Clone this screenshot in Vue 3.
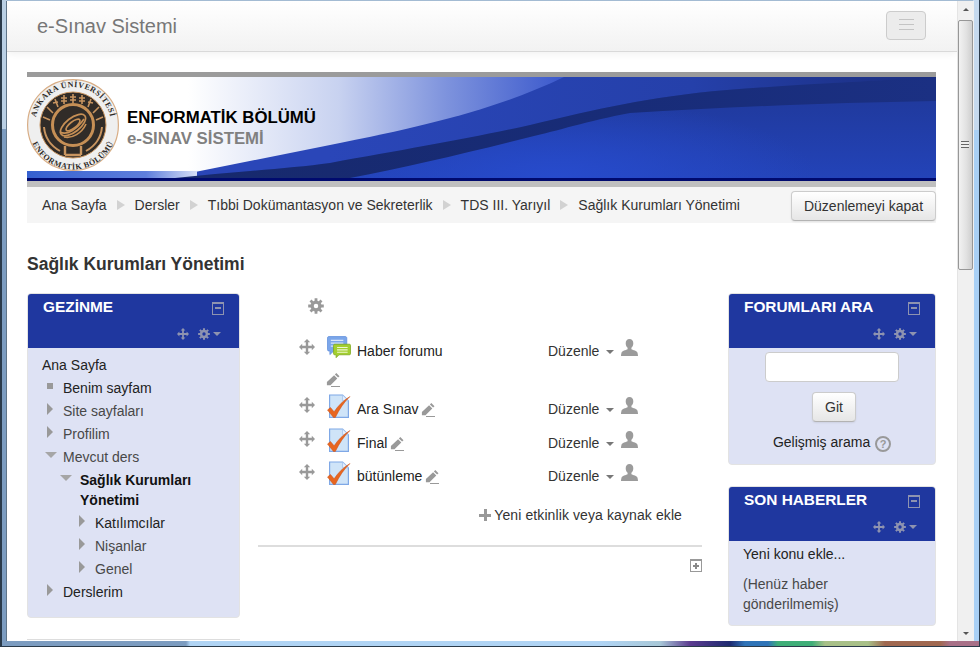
<template>
  <div class="window">
    <!-- icon sprite -->
    <svg class="sprite" aria-hidden="true">
      <symbol id="i-move" viewBox="0 0 16 16">
        <path fill="currentColor" d="M8 0l3.2 3.2H9.200v3.600h3.600V4.800L16 8l-3.200 3.200V9.200H9.200v3.600h2L8 16l-3.200-3.200h2V9.200H3.200v2L0 8l3.200-3.200v2h3.600V3.200h-2z" />
      </symbol>
      <symbol id="i-gear" viewBox="0 0 16 16">
        <circle cx="8" cy="8" r="3.900" fill="none" stroke="currentColor" stroke-width="3.300" />
        <path stroke="currentColor" stroke-width="2.800" fill="none" d="M8 .2V3M8 13v2.800M.2 8H3M13 8h2.800M2.500 2.500l2 2M11.500 11.500l2 2M2.500 13.500l2-2M11.500 4.500l2-2" />
      </symbol>
      <symbol id="i-person" viewBox="0 0 17 17">
        <path fill="currentColor" d="M8.500 0c2.400 0 3.800 1.700 3.800 4.200 0 1.900-.8 3.600-1.900 4.600v1.500c1.800.8 5.600 1.700 6.100 3.400.2.700.5 2.300.5 3.300H0c0-1 .3-2.600.5-3.300.5-1.700 4.300-2.600 6.100-3.400V8.800C5.500 7.800 4.700 6.100 4.700 4.200 4.700 1.700 6.100 0 8.500 0z" />
      </symbol>
      <symbol id="i-pencil" viewBox="0 0 14 14">
        <path fill="currentColor" d="M10.300 0l3.200 3.200-1.400 1.400-3.200-3.200zM8.100 2.200l3.200 3.200-6.800 6.800H.9V9z" />
        <path fill="none" stroke="currentColor" stroke-width="1" d="M5 13.500h9" />
      </symbol>
      <symbol id="i-quiz" viewBox="0 0 24 25">
        <path fill="#cfe4f8" stroke="#7fa8e6" stroke-width="1.200" d="M2.600 1h13l5.800 5.800V23.400H2.600z" />
        <path fill="#eaf3fc" stroke="#9fc0ec" stroke-width=".8" d="M15.600 1v5.800h5.800z" />
        <path fill="#e8661f" stroke="#c9501a" stroke-width=".5" d="M.5 16l3-2.500 3.600 4.300C11 12 16 6.500 23 2.500 17 8 12.500 15 8.300 23.500H6.500z" />
      </symbol>
      <symbol id="i-forum" viewBox="0 0 25 24">
        <path fill="#7ba6ea" stroke="#5f8fdc" stroke-width=".8" d="M2 .6h17c1 0 1.600.6 1.600 1.600V14c0 1-.6 1.600-1.600 1.600H7l-4 3.800v-3.800H2C1 15.600.5 15 .5 14V2.200C.5 1.200 1 .6 2 .6z" />
        <path stroke="#d8e6fa" stroke-width="1.200" d="M4 4.500h13M4 7.500h13M4 10.500h8" />
        <path fill="#a3cf2f" stroke="#7ea61e" stroke-width=".8" d="M8 8.600h15.300c.7 0 1.200.5 1.200 1.200v8.600c0 .7-.5 1.200-1.200 1.200H12.500l-3 3v-3H8c-.7 0-1.200-.5-1.200-1.200V9.800c0-.7.5-1.200 1.200-1.200z" />
        <path stroke="#eef7d0" stroke-width="1.100" d="M10.500 12h11M10.500 14.500h11M10.500 17h11" />
      </symbol>
    </svg>

    <div class="viewport">
      <div class="page">
        <nav class="navbar">
          <span class="brand">e-Sınav Sistemi</span>
          <button class="toggle"><i></i><i></i><i></i></button>
        </nav>

        <div class="content">
          <header class="banner">
            <svg class="banner-art" viewBox="0 0 909 101" preserveAspectRatio="none" aria-hidden="true">
              <defs>
                <linearGradient id="ban-base" x1="0" y1="0" x2="0" y2="1">
                  <stop offset="0" stop-color="#1f3796" />
                  <stop offset="1" stop-color="#2343b8" />
                </linearGradient>
                <linearGradient id="ban-up" x1="300" y1="0" x2="909" y2="0" gradientUnits="userSpaceOnUse">
                  <stop offset="0" stop-color="#2a46b8" />
                  <stop offset=".6" stop-color="#2540aa" />
                  <stop offset="1" stop-color="#1a2d7e" />
                </linearGradient>
                <radialGradient id="ban-glow" cx="530" cy="101" r="260" gradientUnits="userSpaceOnUse" gradientTransform="translate(0 70) scale(1 .3)">
                  <stop offset="0" stop-color="#274bcc" />
                  <stop offset="1" stop-color="#274bcc" stop-opacity="0" />
                </radialGradient>
                <linearGradient id="ban-light" x1="0" y1="0" x2="537" y2="0" gradientUnits="userSpaceOnUse">
                  <stop offset=".3" stop-color="#ffffff" />
                  <stop offset=".58" stop-color="#c8d2f0" />
                  <stop offset=".78" stop-color="#7e93dd" />
                  <stop offset="1" stop-color="#3a58cc" />
                </linearGradient>
                <linearGradient id="ban-strip" x1="0" y1="0" x2="170" y2="0" gradientUnits="userSpaceOnUse">
                  <stop offset="0" stop-color="#3560cf" />
                  <stop offset=".7" stop-color="#5f7fdc" />
                  <stop offset="1" stop-color="#d8e0f6" />
                </linearGradient>
                <linearGradient id="ban-dark" x1="150" y1="0" x2="909" y2="0" gradientUnits="userSpaceOnUse">
                  <stop offset="0" stop-color="#17296c" />
                  <stop offset=".6" stop-color="#182c78" />
                  <stop offset="1" stop-color="#1b3083" />
                </linearGradient>
              </defs>
              <rect width="909" height="101" fill="url(#ban-base)" />
              <rect width="909" height="101" fill="url(#ban-glow)" />
              <path fill="url(#ban-up)" d="M100 0H909V2C850 3 780 7 700 13 620 20 570 32 503 48 440 62 380 72 303 86 260 92 200 95 148 101H100z" />
              <path fill="url(#ban-light)" d="M0 0H537C470 32 403 48 303 68L163 96H0z" />
              <rect y="94" width="170" height="7" fill="url(#ban-strip)" />
              <path fill="url(#ban-dark)" d="M148 101C200 95 260 92 303 86 380 72 440 62 503 48 570 32 620 20 700 13 780 7 850 3 909 1V24C800 26 700 30 603 36 560 44 530 54 503 60 440 76 380 90 323 101z" />
            </svg>
            <svg class="logo" viewBox="0 0 92 92" role="img" aria-label="Enformatik Bölümü">
              <defs>
                <path id="arc-top" d="M46 84A38 38 0 1 1 46.100 84" />
                <path id="arc-bot" d="M1.500 46A44.500 44.500 0 0 0 90.500 46" />
              </defs>
              <circle cx="46" cy="46" r="45.400" fill="#efefef" stroke="#d8ad85" stroke-width="1.200" />
              <circle cx="46" cy="46" r="33" fill="#312c28" stroke="#c99560" stroke-width="1" />
              <text class="logo-text"><textPath href="#arc-top" startOffset="50%" text-anchor="middle">ANKARA ÜNİVERSİTESİ</textPath></text>
              <text class="logo-text"><textPath href="#arc-bot" startOffset="50%" text-anchor="middle">ENFORMATİK BÖLÜMÜ</textPath></text>
              <g stroke="#c99560" fill="none" stroke-width="1.600">
                <path d="M46 15v9M37 16v9M55 16v9M28 20l3 8M64 20l-3 8M20 28l6 6M72 28l-6 6M16 38l7 3M76 38l-7 3" />
                <path d="M34 19h6M43 18h6M52 19h6M34 22h6M43 21h6M52 22h6M26 24l5-1M61 23l5 1" />
                <path d="M17 48c1 11 7 19 16 24M75 48c-1 11-7 19-16 24" stroke-width="2" />
                <path d="M38 67v9M54 67v9M38 76h16" stroke-width="2.400" />
              </g>
              <circle cx="46" cy="46" r="20.500" fill="#312c28" stroke="#c68f55" stroke-width="3" />
              <g fill="none" stroke="#c68f55" stroke-width="1.700">
                <ellipse cx="46" cy="46" rx="15" ry="7" transform="rotate(-38 46 46)" />
                <ellipse cx="46" cy="46" rx="8.500" ry="3.200" transform="rotate(-38 46 46)" />
                <path d="M33 53c7 4 17-3 24-13M37 58c8 2 18-4 22-13" />
              </g>
            </svg>
            <div class="banner-text">
              <div class="banner-dept">ENFORMATİK BÖLÜMÜ</div>
              <div class="banner-sys">e-SINAV SİSTEMİ</div>
            </div>
          </header>
          <div class="banner-rule"></div>

          <div class="crumbs">
            <template v-for="(c, i) in crumbs" :key="c">
              <span v-if="i" class="crumb-sep"></span>
              <span class="crumb">{{ c }}</span>
            </template>
            <button class="btn edit-btn">Düzenlemeyi kapat</button>
          </div>

          <h1 class="course-title">Sağlık Kurumları Yönetimi</h1>

          <div class="columns">
            <!-- left -->
            <div class="col-side">
              <section class="block nav-block">
                <div class="block-hd">
                  <h2>GEZİNME</h2>
                  <span class="min-box"><i></i></span>
                  <div class="block-tools">
                    <svg class="ico-move"><use href="#i-move" /></svg>
                    <svg class="ico-gear"><use href="#i-gear" /></svg>
                    <span class="caret"></span>
                  </div>
                </div>
                <div class="tree">
                  <div v-for="n in tree" :key="n.label" class="tree-row" :class="[n.cls, 'lvl' + n.level]">
                    <span class="tw" :class="n.arrow"></span>
                    <span class="tree-label">{{ n.label }}</span>
                  </div>
                </div>
              </section>
              <div class="next-block-edge"></div>
            </div>

            <!-- center -->
            <main class="col-main">
              <svg class="main-gear"><use href="#i-gear" /></svg>
              <div class="activity first">
                <svg class="ico-drag"><use href="#i-move" /></svg>
                <svg class="ico-mod"><use href="#i-forum" /></svg>
                <span class="act-name">Haber forumu</span>
                <span class="act-edit">Düzenle <span class="caret"></span></span>
                <svg class="ico-person"><use href="#i-person" /></svg>
              </div>
              <div class="lone-pencil"><svg class="ico-pen"><use href="#i-pencil" /></svg></div>
              <div v-for="a in quizzes" :key="a.name" class="activity" :class="a.cls">
                <svg class="ico-drag"><use href="#i-move" /></svg>
                <svg class="ico-mod"><use href="#i-quiz" /></svg>
                <span class="act-name">{{ a.name }} <svg class="ico-pen"><use href="#i-pencil" /></svg></span>
                <span class="act-edit">Düzenle <span class="caret"></span></span>
                <svg class="ico-person"><use href="#i-person" /></svg>
              </div>
              <div class="add-row">
                <span class="plus"></span>
                <span>Yeni etkinlik veya kaynak ekle</span>
              </div>
              <div class="section-end">
                <span class="max-box"><i></i></span>
              </div>
            </main>

            <!-- right -->
            <div class="col-right">
              <section class="block search-block">
                <div class="block-hd">
                  <h2>FORUMLARI ARA</h2>
                  <span class="min-box"><i></i></span>
                  <div class="block-tools">
                    <svg class="ico-move"><use href="#i-move" /></svg>
                    <svg class="ico-gear"><use href="#i-gear" /></svg>
                    <span class="caret"></span>
                  </div>
                </div>
                <div class="search-body">
                  <input class="search-input" type="text" />
                  <button class="btn go-btn">Git</button>
                  <div class="adv">Gelişmiş arama <span class="help">?</span></div>
                </div>
              </section>
              <section class="block news-block">
                <div class="block-hd">
                  <h2>SON HABERLER</h2>
                  <span class="min-box"><i></i></span>
                  <div class="block-tools">
                    <svg class="ico-move"><use href="#i-move" /></svg>
                    <svg class="ico-gear"><use href="#i-gear" /></svg>
                    <span class="caret"></span>
                  </div>
                </div>
                <div class="news-body">
                  <div class="news-add">Yeni konu ekle...</div>
                  <div class="news-none">(Henüz haber gönderilmemiş)</div>
                </div>
              </section>
            </div>
          </div>
        </div>
      </div>

      <!-- browser scrollbar -->
      <div class="scrollbar">
        <span class="sb-up"></span>
        <div class="sb-thumb"><span class="sb-grip"></span></div>
        <span class="sb-down"></span>
      </div>
    </div>
  </div>
</template>

<script setup>
const crumbs = [
  'Ana Sayfa',
  'Dersler',
  'Tıbbi Dokümantasyon ve Sekreterlik',
  'TDS III. Yarıyıl',
  'Sağlık Kurumları Yönetimi',
]

const tree = [
  { label: 'Ana Sayfa', level: 0, arrow: 'none', cls: 'dark' },
  { label: 'Benim sayfam', level: 1, arrow: 'leaf', cls: 'dark' },
  { label: 'Site sayfaları', level: 1, arrow: 'closed', cls: '' },
  { label: 'Profilim', level: 1, arrow: 'closed', cls: '' },
  { label: 'Mevcut ders', level: 1, arrow: 'open', cls: '' },
  { label: 'Sağlık Kurumları Yönetimi', level: 2, arrow: 'open', cls: 'current' },
  { label: 'Katılımcılar', level: 3, arrow: 'closed', cls: 'dark' },
  { label: 'Nişanlar', level: 3, arrow: 'closed', cls: '' },
  { label: 'Genel', level: 3, arrow: 'closed', cls: '' },
  { label: 'Derslerim', level: 1, arrow: 'closed', cls: 'dark' },
]

const quizzes = [
  { name: 'Ara Sınav', cls: 'q1' },
  { name: 'Final', cls: 'q2' },
  { name: 'bütünleme', cls: 'q3' },
]
</script>

<style>
html, body { margin: 0; overflow: hidden; }
</style>

<style scoped>
.window {
  width: 980px;
  height: 647px;
  box-sizing: border-box;
  padding: 1px 6px 6px 7px;
  overflow: hidden;
  font-family: "Liberation Sans", Arial, sans-serif;
  font-size: 14px;
  color: #333;
  background:
    linear-gradient(90deg, #7c9cc0 0 186px, #b0d4f4 190px 600px, #a8c8d8 660px, #5c3c90 690px, #1d2a70 730px, #2f74b8 745px 768px, #3fae78 778px 812px, #a8c088 825px 868px, #a06850 885px 940px, #a87088 950px) left bottom / 100% 6px no-repeat,
    linear-gradient(180deg, #c5d9ee 0 130px, #a9d0f5 130px) right top / 7px 100% no-repeat,
    linear-gradient(180deg, #b9cfe4 0 129px, #7c9cc0 129px) left top / 7px 100% no-repeat,
    #a3bbd3;
  box-shadow: inset 2px 0 #2a3a4a, inset -1px 0 #2a3a4a, inset 0 -1px #2a3a4a;
}
.sprite { position: absolute; width: 0; height: 0; }
.viewport {
  display: flex;
  height: 640px;
  border-left: 1px solid #5f7488;
  margin-left: -1px;
  background: #fff;
}
.page { width: 950px; flex: none; overflow: hidden; }

/* navbar */
.navbar {
  height: 50px;
  display: flex;
  align-items: center;
  justify-content: space-between;
  padding: 0 31px 0 30px;
  background: linear-gradient(#ffffff, #f2f2f2);
  border-bottom: 1px solid #d9d9d9;
  box-shadow: 0 2px 8px rgba(0, 0, 0, .06);
}
.brand { font-size: 20px; color: #777; }
.toggle {
  width: 40px;
  height: 29px;
  margin-top: -2px;
  padding: 0;
  display: flex;
  flex-direction: column;
  align-items: center;
  justify-content: center;
  gap: 3px;
  background: #ececec;
  border: 1px solid #ccc;
  border-radius: 4px;
}
.toggle i { display: block; width: 15px; height: 1px; background: #c4c4c4; margin-bottom: 1px; }

.content { padding: 20px 21px 0 20px; }

/* banner */
.banner {
  position: relative;
  height: 101px;
  border-top: 5px solid #9b9b9b;
  display: flex;
  align-items: center;
}
.banner-art { position: absolute; inset: 0; width: 100%; height: 100%; }
.logo { position: relative; flex: none; width: 92px; height: 92px; margin-top: -5px; }
.logo-text { font: bold 8px "Liberation Serif", serif; fill: #2e2a26; letter-spacing: .5px; }
.banner-text { position: relative; margin-left: 8px; font-weight: bold; }
.banner-dept { font-size: 16.800px; line-height: 21px; color: #000; }
.banner-sys { font-size: 16.800px; line-height: 21px; color: #808080; }
.banner-rule { height: 9px; box-sizing: border-box; border-top: 3px solid #000a6e; background: #bfbfbf; }

/* breadcrumb */
.crumbs {
  height: 36px;
  display: flex;
  align-items: center;
  padding-left: 15px;
  background: #f5f5f5;
}
.crumb-sep {
  width: 0;
  height: 0;
  margin: 0 10px;
  border-left: 8px solid #d2d2d2;
  border-top: 5px solid transparent;
  border-bottom: 5px solid transparent;
}
.crumb { color: #333; white-space: nowrap; }
.btn {
  font: inherit;
  color: #333;
  background: linear-gradient(#fff, #e6e6e6);
  border: 1px solid #ccc;
  border-bottom-color: #b3b3b3;
  border-radius: 4px;
  box-shadow: 0 1px 2px rgba(0, 0, 0, .08);
}
.edit-btn { margin: 2px 0 0 auto; width: 145px; height: 30px; padding: 0; }

.course-title {
  margin: 31px 0 19px;
  height: 20px;
  line-height: 20px;
  font-size: 17.500px;
  font-weight: bold;
  color: #333;
}

.columns { display: flex; align-items: flex-start; }
.col-side { width: 213px; flex: none; }
.col-main { width: 444px; flex: none; margin: 0 26px 0 18px; }
.col-right { width: 208px; flex: none; }

/* blocks */
.block {
  background: #dee2f4;
  border-radius: 4px;
  overflow: hidden;
  border: 1px solid #e3e3e3;
  box-sizing: border-box;
}
.block-hd {
  position: relative;
  height: 54px;
  background: #1f379f;
}
.block-hd h2 {
  margin: 0;
  padding: 3px 0 0 15px;
  font-size: 15.400px;
  line-height: 20px;
  font-weight: bold;
  color: #fff;
}
.min-box {
  position: absolute;
  top: 8px;
  right: 15px;
  width: 10px;
  height: 10px;
  border: 1px solid #8e93b0;
  border-top-width: 2px;
}
.min-box i { position: absolute; left: 2px; top: 3px; width: 6px; height: 2px; background: #8e93b0; }
.block-tools {
  position: absolute;
  right: 18px;
  top: 34px;
  display: flex;
  align-items: center;
  color: #8e93b0;
}
.ico-move { width: 12px; height: 12px; color: inherit; }
.ico-gear { width: 12px; height: 12px; margin-left: 9px; color: inherit; }
.block-tools .caret { margin-left: 3px; border-top-color: #8e93b0; }
.caret {
  display: inline-block;
  width: 0;
  height: 0;
  vertical-align: middle;
  border-left: 4px solid transparent;
  border-right: 4px solid transparent;
  border-top: 4px solid #777;
}

/* nav tree */
.nav-block { height: 325px; }
.tree { padding: 6px 14px 0 14px; }
.tree-row { position: relative; line-height: 23px; color: #484848; }
.tree-row.dark { color: #222; }
.tree-row.current { font-weight: bold; color: #111; line-height: 20px; padding-top: 1px; padding-bottom: 2px; }
.lvl1 { padding-left: 21px; }
.lvl2 { padding-left: 38px; }
.lvl3 { padding-left: 53px; }
.tw { position: absolute; top: 5px; width: 0; height: 0; }
.lvl1 .tw { left: 5px; }
.lvl2 .tw { left: 18px; }
.lvl3 .tw { left: 37px; }
.tw.none { display: none; }
.tw.leaf { width: 6px; height: 6px; background: #999; top: 6px; }
.tw.closed {
  border-left: 6px solid #999;
  border-top: 6px solid transparent;
  border-bottom: 6px solid transparent;
  top: 3px;
}
.tw.open {
  border-top: 6px solid #a6a6a6;
  border-left: 6.500px solid transparent;
  border-right: 6.500px solid transparent;
  top: 6px;
}
.lvl1 .tw.open { left: 3px; }
.next-block-edge { height: 1px; margin-top: 21px; background: #ddd; }

/* main column */
.main-gear { display: block; width: 16px; height: 16px; margin: 5px 0 0 50px; color: #999; }
.activity {
  display: grid;
  grid-template-columns: 16px 42px 191px 73px 17px;
  align-items: center;
  margin-left: 41px;
  height: 34px;
}
.activity.first { margin-top: 18px; height: 37px; }
.ico-drag { width: 16px; height: 16px; color: #999; margin-top: -8px; }
.ico-mod { width: 24px; height: 25px; margin-left: 12px; margin-top: -5px; }
.first .ico-mod { margin-top: -6px; }
.act-name { color: #222; white-space: nowrap; }
.act-edit { white-space: nowrap; color: #333; }
.act-edit .caret { margin-left: 3px; }
.ico-person { width: 17px; height: 17px; color: #9b9b9b; margin-top: -7px; }
.ico-pen { width: 14px; height: 14px; color: #999; vertical-align: -3px; margin-left: -1px; }
.lone-pencil { height: 23px; margin-left: 69px; padding-top: 2px; box-sizing: border-box; }
.q2, .q3 { height: 33px; }
.add-row {
  display: flex;
  align-items: center;
  justify-content: flex-end;
  gap: 3px;
  margin: 13px 20px 0 0;
  line-height: 20px;
  letter-spacing: .1px;
  color: #333;
}
.plus {
  position: relative;
  width: 12px;
  height: 12px;
  background:
    linear-gradient(#999, #999) center / 12px 3px no-repeat,
    linear-gradient(#999, #999) center / 3px 12px no-repeat;
}
.section-end {
  display: flex;
  justify-content: flex-end;
  margin-top: 20px;
  padding-top: 12px;
  border-top: 2px solid #ddd;
}
.max-box {
  position: relative;
  width: 10px;
  height: 10px;
  border: 1px solid #999;
  border-top-width: 2px;
}
.max-box i {
  position: absolute;
  left: 2px;
  top: 2px;
  width: 6px;
  height: 6px;
  background:
    linear-gradient(#888, #888) center / 6px 2px no-repeat,
    linear-gradient(#888, #888) center / 2px 6px no-repeat;
}

/* right blocks */
.search-block { height: 172px; }
.search-body {
  display: flex;
  flex-direction: column;
  align-items: center;
  padding-top: 4px;
}
.search-input {
  width: 134px;
  height: 30px;
  box-sizing: border-box;
  background: #fff;
  border: 1px solid #ccc;
  border-radius: 4px;
}
.go-btn { width: 44px; height: 30px; padding: 0; margin: 10px 0 0 4px; }
.adv { margin-top: 9px; line-height: 22px; color: #222; white-space: nowrap; }
.help {
  display: inline-block;
  width: 12px;
  height: 12px;
  line-height: 12px;
  margin-left: 1px;
  text-align: center;
  font-size: 11px;
  font-weight: bold;
  color: #999;
  border: 2px solid #999;
  border-radius: 50%;
  vertical-align: -1px;
}
.news-block { height: 140px; margin-top: 21px; }
.news-body { padding: 3px 15px 0 14px; line-height: 20px; }
.news-add { color: #222; }
.news-none { margin-top: 10px; color: #484848; }

/* window scrollbar */
.scrollbar {
  position: relative;
  width: 16px;
  flex: none;
  background: #f0f0f0;
  border-left: 1px solid #e4e4e4;
}
.sb-up, .sb-down {
  position: absolute;
  left: 5px;
  width: 0;
  height: 0;
  border-left: 3px solid transparent;
  border-right: 3px solid transparent;
}
.sb-up { top: 7px; border-bottom: 3px solid #555; }
.sb-down { bottom: 6px; border-top: 3px solid #555; }
.sb-thumb {
  position: absolute;
  top: 19px;
  left: 0;
  width: 15px;
  height: 250px;
  box-sizing: border-box;
  background: linear-gradient(90deg, #f2f2f2, #e2e2e2 55%, #cfcfcf);
  border: 1px solid #979797;
  border-radius: 2px;
}
.sb-grip {
  position: absolute;
  left: 2px;
  top: 120px;
  width: 8px;
  height: 7px;
  background: repeating-linear-gradient(#666 0 1px, #eee 1px 3px);
}
</style>
